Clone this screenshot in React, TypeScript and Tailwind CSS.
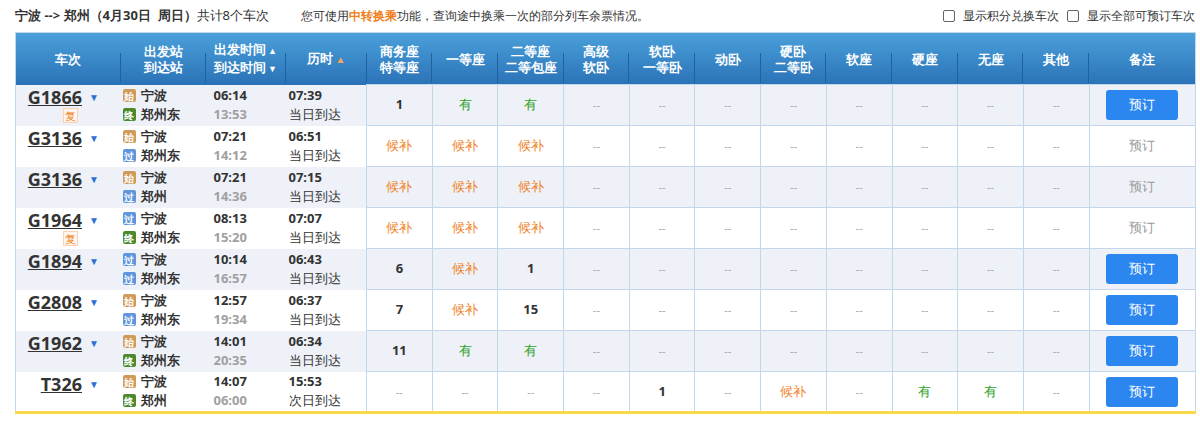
import React from 'react';

type Row = {
  no: string;
  xia?: boolean;
  from: [string, string];
  to: [string, string];
  dep: string;
  arr: string;
  dur: string;
  day: string;
  seats: string[];
  book: boolean;
};

const rows: Row[] = [
  { no: 'G1866', xia: true, from: ['始', '宁波'], to: ['终', '郑州东'], dep: '06:14', arr: '13:53', dur: '07:39', day: '当日到达', seats: ['1', '有', '有', '--', '--', '--', '--', '--', '--', '--', '--'], book: true },
  { no: 'G3136', from: ['始', '宁波'], to: ['过', '郑州东'], dep: '07:21', arr: '14:12', dur: '06:51', day: '当日到达', seats: ['候补', '候补', '候补', '--', '--', '--', '--', '--', '--', '--', '--'], book: false },
  { no: 'G3136', from: ['始', '宁波'], to: ['过', '郑州'], dep: '07:21', arr: '14:36', dur: '07:15', day: '当日到达', seats: ['候补', '候补', '候补', '--', '--', '--', '--', '--', '--', '--', '--'], book: false },
  { no: 'G1964', xia: true, from: ['过', '宁波'], to: ['终', '郑州东'], dep: '08:13', arr: '15:20', dur: '07:07', day: '当日到达', seats: ['候补', '候补', '候补', '--', '--', '--', '--', '--', '--', '--', '--'], book: false },
  { no: 'G1894', from: ['过', '宁波'], to: ['过', '郑州东'], dep: '10:14', arr: '16:57', dur: '06:43', day: '当日到达', seats: ['6', '候补', '1', '--', '--', '--', '--', '--', '--', '--', '--'], book: true },
  { no: 'G2808', from: ['始', '宁波'], to: ['过', '郑州东'], dep: '12:57', arr: '19:34', dur: '06:37', day: '当日到达', seats: ['7', '候补', '15', '--', '--', '--', '--', '--', '--', '--', '--'], book: true },
  { no: 'G1962', from: ['始', '宁波'], to: ['终', '郑州东'], dep: '14:01', arr: '20:35', dur: '06:34', day: '当日到达', seats: ['11', '有', '有', '--', '--', '--', '--', '--', '--', '--', '--'], book: true },
  { no: 'T326', from: ['始', '宁波'], to: ['终', '郑州'], dep: '14:07', arr: '06:00', dur: '15:53', day: '次日到达', seats: ['--', '--', '--', '--', '1', '--', '候补', '--', '有', '有', '--'], book: true },
];

const badgeColor: Record<string, string> = {
  始: 'bg-[#d09a58]',
  过: 'bg-[#5f95dc]',
  终: 'bg-[#4b8a2c]',
};

function Badge({ k }: { k: string }) {
  return (
    <span className={`inline-flex items-center justify-center w-[13px] h-[13px] mr-[5px] text-[10px] leading-none text-white rounded-[2px] ${badgeColor[k]}`}>{k}</span>
  );
}

function Seat({ v }: { v: string }) {
  if (v === '候补') return <span className="text-[#f0801a] text-[13px]">候补</span>;
  if (v === '有') return <span className="text-[#2ea11e] text-[13px]">有</span>;
  if (v === '--') return <span className="text-[#aaa] text-[11px]">--</span>;
  return <span className="text-[#333] font-bold text-[13px]">{v}</span>;
}

const Sep = () => <span className="absolute right-0 top-[20px] h-[30px] w-px bg-[#23609e]" />;

const seatHeads = [['商务座', '特等座'], ['一等座'], ['二等座', '二等包座'], ['高级', '软卧'], ['软卧', '一等卧'], ['动卧'], ['硬卧', '二等卧'], ['软座'], ['硬座'], ['无座'], ['其他']];

export default function App() {
  return (
    <div className="w-[1200px] h-[421px] bg-white overflow-hidden font-['Microsoft_YaHei','Noto_Sans_CJK_SC',sans-serif] text-[12px] text-[#333]">
      <div className="flex items-center h-[32px] pl-[15px] pr-[5px]">
        <span className="font-bold text-[13px]">宁波 --&gt; 郑州（4月30日&nbsp;&nbsp;周日）</span>
        <span className="text-[13px]">共计8个车次</span>
        <span className="ml-[32px] text-[12px]">您可使用<span className="text-[#f0801a] font-bold">中转换乘</span>功能，查询途中换乘一次的部分列车余票情况。</span>
        <div className="ml-auto flex items-center gap-[4px] text-[12px]">
          <span className="w-[12px] h-[12px] border border-[#666] rounded-[2px] mr-[4px]" />
          <span>显示积分兑换车次</span>
          <span className="w-[12px] h-[12px] border border-[#666] rounded-[2px] mx-[4px]" />
          <span>显示全部可预订车次</span>
        </div>
      </div>
      <table className="ml-[15px] w-[1180px] table-fixed border-collapse border border-[#c3d7eb]">
        <colgroup>
          <col className="w-[105px]" />
          <col className="w-[85px]" />
          <col className="w-[80px]" />
          <col className="w-[81px]" />
          {seatHeads.map((_, i) => <col key={i} className="w-[65.7px]" />)}
          <col className="w-[106px]" />
        </colgroup>
        <thead>
          <tr className="h-[52px] bg-gradient-to-b from-[#4ba0da] to-[#2a72b7] text-white font-bold text-[13px] leading-[16px]">
            <th className="relative">车次<Sep /></th>
            <th className="relative">出发站<br />到达站<Sep /></th>
            <th className="relative">
              <div className="flex flex-col items-center">
                <span>出发时间<span className="text-[9px] ml-[2px]">▲</span></span>
                <span>到达时间<span className="text-[9px] ml-[2px]">▼</span></span>
              </div>
              <Sep />
            </th>
            <th className="relative">历时<span className="text-[#f7a35c] text-[10px] ml-[3px]">▲</span><Sep /></th>
            {seatHeads.map((h, i) => (
              <th key={i} className="relative">
                {h.map((t, j) => <div key={j}>{t}</div>)}
                <Sep />
              </th>
            ))}
            <th>备注</th>
          </tr>
        </thead>
        <tbody>
          {rows.map((r, i) => (
            <tr key={i} className={`h-[41px] ${i % 2 === 0 ? 'bg-[#eef1f8]' : 'bg-white'} ${i === rows.length - 1 ? 'border-b-[3px] border-b-[#f9d94a]' : ''}`}>
              <td className="align-top">
                <div className="flex pt-[2px]">
                  <div className="w-[66px] flex flex-col items-end">
                    <span className="font-['Liberation_Serif',serif] font-bold text-[18px] leading-[20px] underline text-[#333]">{r.no}</span>
                    {r.xia && <span className="mt-[1px] mr-[4px] w-[15px] h-[15px] flex items-center justify-center text-[11px] text-[#f0801a] border border-[#fbd3b3] bg-[#fff5ec] leading-none">复</span>}
                  </div>
                  <span className="ml-[7px] mt-[3px] text-[#2e6fd3] text-[10px]">▼</span>
                </div>
              </td>
              <td className="align-middle text-[13px] leading-[19px] font-bold">
                <div className="pl-[2px]">
                  <div className="flex items-center"><Badge k={r.from[0]} />{r.from[1]}</div>
                  <div className="flex items-center"><Badge k={r.to[0]} />{r.to[1]}</div>
                </div>
              </td>
              <td className="align-middle font-['DejaVu_Sans','Noto_Sans_CJK_SC',sans-serif] font-bold text-[13px] leading-[19px] pl-[8px]">
                <div>{r.dep}</div>
                <div className="text-[#a0a0a0]">{r.arr}</div>
              </td>
              <td className="align-middle text-[13px] leading-[19px] pl-[3px]">
                <div className="font-['DejaVu_Sans',sans-serif] font-bold">{r.dur}</div>
                <div>{r.day}</div>
              </td>
              {r.seats.map((s, j) => (
                <td key={j} className="text-center border border-[#c3d7eb]"><Seat v={s} /></td>
              ))}
              <td className="text-center border border-[#c3d7eb]">
                {r.book ? (
                  <button className="w-[72px] h-[30px] rounded-[3px] bg-[#2b86f0] text-white text-[13px]">预订</button>
                ) : (
                  <span className="text-[#999] text-[13px]">预订</span>
                )}
              </td>
            </tr>
          ))}
        </tbody>
      </table>
    </div>
  );
}
